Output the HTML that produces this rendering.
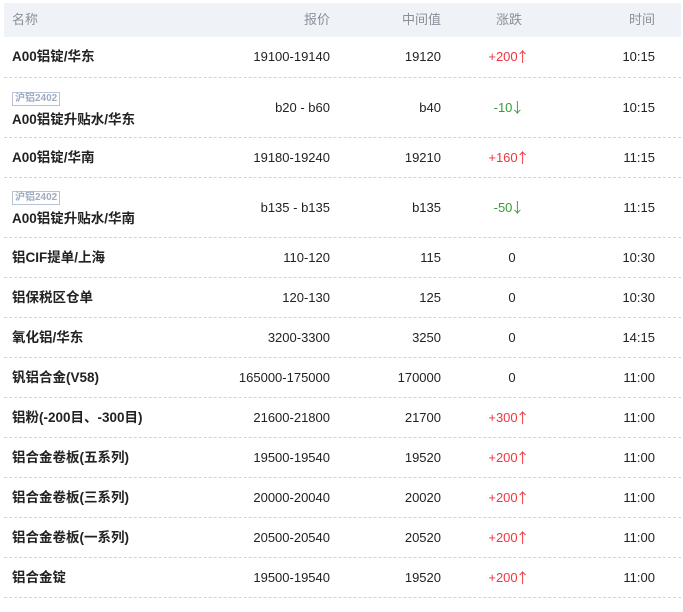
<!DOCTYPE html>
<html><head><meta charset="utf-8"><style>
*{margin:0;padding:0;box-sizing:border-box}
body{width:683px;height:612px;background:#fff;font-family:"Liberation Sans","Noto Sans CJK SC",sans-serif;font-size:13px;color:#222;position:relative;overflow:hidden}
.hd{position:absolute;left:4px;top:3px;width:677px;height:34px;background:#eff3f8;color:#8a8f99}
.row{position:absolute;left:4px;width:677px;border-bottom:1px dashed #cfd4dc}
.c{position:absolute;top:50%;transform:translateY(-50%);white-space:nowrap;line-height:16px}
.n{left:8px;font-weight:bold;font-size:13.5px}
.p{right:351px}
.m{right:240px}
.z{left:505px;width:0;display:flex;justify-content:center}
.z span{white-space:nowrap}
.t{right:26px}
.up{color:#f2353c}.dn{color:#3a9a3a}
.a{font-size:14px;line-height:16px;font-family:"Noto Sans CJK SC",sans-serif;margin-left:-2px;display:inline-block;vertical-align:top}
.tag{display:inline-block;font-size:10px;color:#9eabc2;border:1px solid #b9c3d5;padding:0 2px;line-height:12px;font-weight:bold;margin-bottom:5px}
.nn{position:absolute;left:8px;font-weight:bold;font-size:13.5px}
</style></head><body>
<div class="hd">
<span class="c" style="left:8px">名称</span>
<span class="c p">报价</span>
<span class="c m">中间值</span>
<span class="c z"><span>涨跌</span></span>
<span class="c t">时间</span>
</div>

<div class="row" style="top:37px;height:41px"><span class="c n">A00铝锭/华东</span><span class="c p">19100-19140</span><span class="c m">19120</span><span class="c z"><span class="up">+200<span class="a">↑</span></span></span><span class="c t">10:15</span></div>
<div class="row" style="top:78px;height:60px"><span class="nn" style="top:11px"><span class="tag">沪铝2402</span></span><span class="nn" style="top:30px">A00铝锭升贴水/华东</span><span class="c p">b20 - b60</span><span class="c m">b40</span><span class="c z"><span class="dn">-10<span class="a">↓</span></span></span><span class="c t">10:15</span></div>
<div class="row" style="top:138px;height:40px"><span class="c n">A00铝锭/华南</span><span class="c p">19180-19240</span><span class="c m">19210</span><span class="c z"><span class="up">+160<span class="a">↑</span></span></span><span class="c t">11:15</span></div>
<div class="row" style="top:178px;height:60px"><span class="nn" style="top:10px"><span class="tag">沪铝2402</span></span><span class="nn" style="top:29px">A00铝锭升贴水/华南</span><span class="c p">b135 - b135</span><span class="c m">b135</span><span class="c z"><span class="dn">-50<span class="a">↓</span></span></span><span class="c t">11:15</span></div>
<div class="row" style="top:238px;height:40px"><span class="c n">铝CIF提单/上海</span><span class="c p">110-120</span><span class="c m">115</span><span class="c z" style="left:508px"><span>0</span></span><span class="c t">10:30</span></div>
<div class="row" style="top:278px;height:40px"><span class="c n">铝保税区仓单</span><span class="c p">120-130</span><span class="c m">125</span><span class="c z" style="left:508px"><span>0</span></span><span class="c t">10:30</span></div>
<div class="row" style="top:318px;height:40px"><span class="c n">氧化铝/华东</span><span class="c p">3200-3300</span><span class="c m">3250</span><span class="c z" style="left:508px"><span>0</span></span><span class="c t">14:15</span></div>
<div class="row" style="top:358px;height:40px"><span class="c n">钒铝合金(V58)</span><span class="c p">165000-175000</span><span class="c m">170000</span><span class="c z" style="left:508px"><span>0</span></span><span class="c t">11:00</span></div>
<div class="row" style="top:398px;height:40px"><span class="c n">铝粉(-200目、-300目)</span><span class="c p">21600-21800</span><span class="c m">21700</span><span class="c z"><span class="up">+300<span class="a">↑</span></span></span><span class="c t">11:00</span></div>
<div class="row" style="top:438px;height:40px"><span class="c n">铝合金卷板(五系列)</span><span class="c p">19500-19540</span><span class="c m">19520</span><span class="c z"><span class="up">+200<span class="a">↑</span></span></span><span class="c t">11:00</span></div>
<div class="row" style="top:478px;height:40px"><span class="c n">铝合金卷板(三系列)</span><span class="c p">20000-20040</span><span class="c m">20020</span><span class="c z"><span class="up">+200<span class="a">↑</span></span></span><span class="c t">11:00</span></div>
<div class="row" style="top:518px;height:40px"><span class="c n">铝合金卷板(一系列)</span><span class="c p">20500-20540</span><span class="c m">20520</span><span class="c z"><span class="up">+200<span class="a">↑</span></span></span><span class="c t">11:00</span></div>
<div class="row" style="top:558px;height:40px"><span class="c n">铝合金锭</span><span class="c p">19500-19540</span><span class="c m">19520</span><span class="c z"><span class="up">+200<span class="a">↑</span></span></span><span class="c t">11:00</span></div>
</body></html>
